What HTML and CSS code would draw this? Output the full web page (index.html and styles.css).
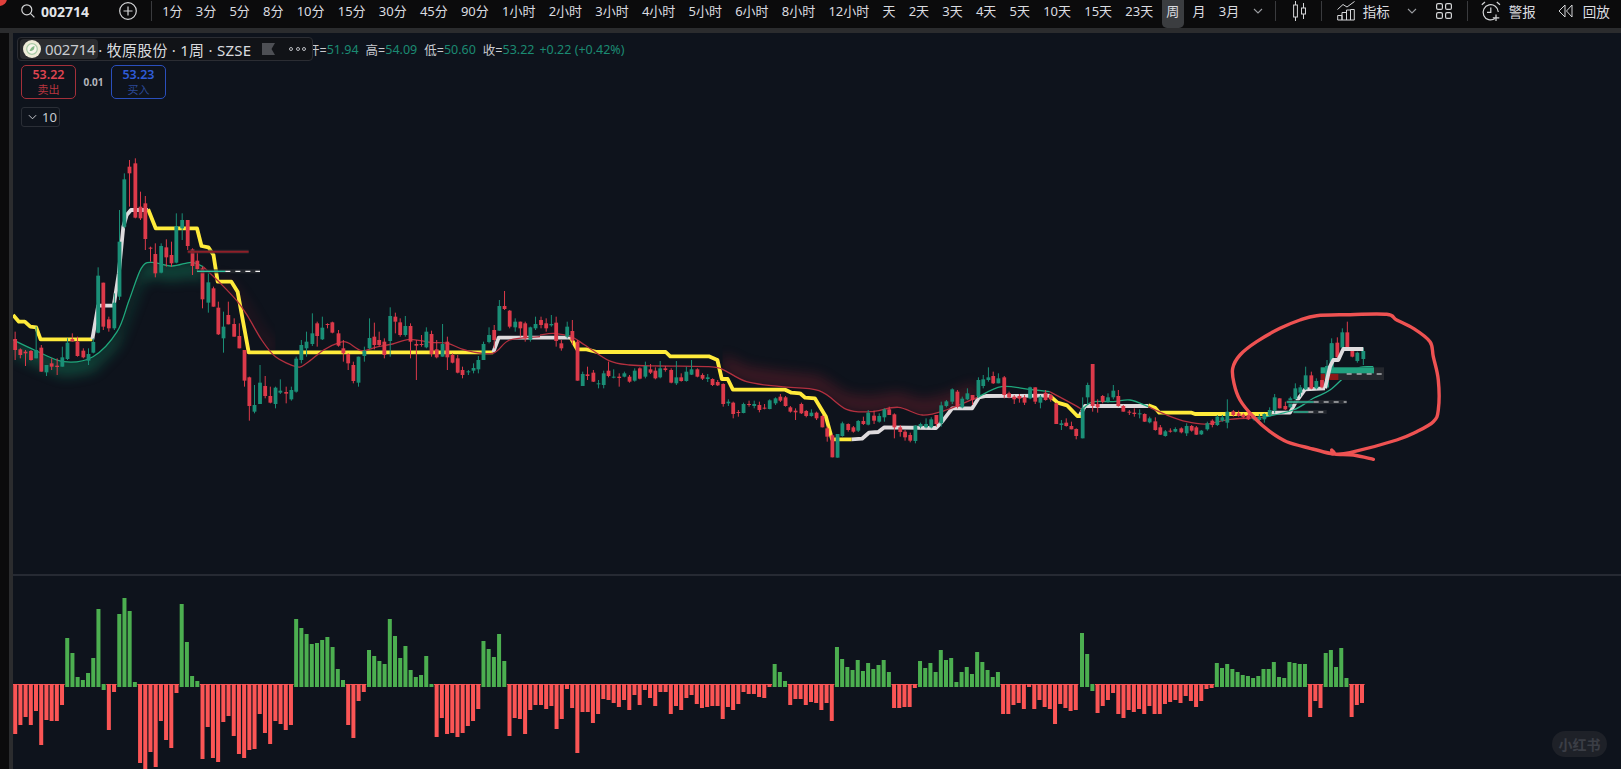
FILE: index.html
```html
<!DOCTYPE html>
<html lang="zh-CN">
<head>
<meta charset="utf-8">
<title>002714 牧原股份</title>
<link rel="stylesheet" href="styles.css">
</head>
<body>
<div class="app">
  <span class="corner-dot"></span>
  <header class="toolbar">
    <svg class="icon-search" viewBox="0 0 14 14"><circle cx="5.8" cy="5.8" r="5"/><path d="M9.4 9.4 13.4 13.4"/></svg>
    <span class="symbol">002714</span>
    <svg class="icon-plus" viewBox="0 0 18 18"><circle cx="9" cy="9" r="8.3"/><path d="M9 4.5v9M4.5 9h9"/></svg>
    <span class="divider first"></span>
    <nav class="intervals">
      <span class="tf">1分</span><span class="tf">3分</span><span class="tf">5分</span><span class="tf">8分</span><span class="tf">10分</span><span class="tf">15分</span><span class="tf">30分</span><span class="tf">45分</span><span class="tf">90分</span><span class="tf">1小时</span><span class="tf">2小时</span><span class="tf">3小时</span><span class="tf">4小时</span><span class="tf">5小时</span><span class="tf">6小时</span><span class="tf">8小时</span><span class="tf">12小时</span><span class="tf">天</span><span class="tf">2天</span><span class="tf">3天</span><span class="tf">4天</span><span class="tf">5天</span><span class="tf">10天</span><span class="tf">15天</span><span class="tf">23天</span><span class="tf active">周</span><span class="tf">月</span><span class="tf">3月</span>
    </nav>
    <svg class="chev chev-tf" viewBox="0 0 10 6"><path d="M1 1l4 4 4-4"/></svg>
    <span class="divider d-candle"></span>
    <svg class="icon-candle" viewBox="0 0 14 20"><path d="M2.5 0v4M2.500 16v4M10.5 2v5M10.500 13v5"/><rect x=".6" y="4" width="3.800" height="12"/><rect x="8.500" y="7" width="4" height="6"/></svg>
    <span class="divider d-ind"></span>
    <svg class="icon-ind" viewBox="0 0 18 20"><path class="thin" d="M.5 8.500 6 3.500 10 6 17.500 .5"/><path class="thin" d="M.7 19V14.500H5V19M5 19V11.500H9.500V19M9.500 19V9H13.500V19M13.500 19V8.500H17.300V19H.7"/></svg>
    <span class="tool ind-label">指标</span>
    <svg class="chev chev-ind" viewBox="0 0 10 6"><path d="M1 1l4 4 4-4"/></svg>
    <svg class="icon-grid" viewBox="0 0 16 16"><rect x=".6" y=".6" width="5.800" height="5.800" rx="1.500"/><rect x="9.600" y=".6" width="5.800" height="5.800" rx="1.500"/><rect x=".6" y="9.600" width="5.800" height="5.800" rx="1.500"/><rect x="9.600" y="9.600" width="5.800" height="5.800" rx="1.500"/></svg>
    <span class="divider d-alarm"></span>
    <svg class="icon-alarm" viewBox="0 0 20 21"><path d="M14 17.600A7.600 7.600 0 1 1 17.300 11"/><path d="M9.800 6.500V11.300H6M.8 3.800 4 1M19 3.800 15.800 1M15 13.500v6.500M11.800 16.800h6.500"/></svg>
    <span class="tool alarm-label">警报</span>
    <svg class="icon-back" viewBox="0 0 15 14"><path d="M7 1 1 7l6 6zM14 1 8.500 7l5.500 6z"/></svg>
    <span class="tool">回放</span>
  </header>

  <div class="workspace">
    <div class="rail"></div>
    <main class="panes">
      <section class="pane pane-price">
        <svg id="price" class="chart" viewBox="13 33 1608 541" preserveAspectRatio="none"></svg>
        <div class="legend-stack">
          <div class="legend-row">
            <div class="legend">
              <span class="chip">
                <svg class="logo" viewBox="0 0 18 18"><circle cx="9" cy="9" r="9" fill="#efecd8"/><circle cx="9" cy="9" r="5.300" fill="#f8f7ec" stroke="#a9cba6" stroke-width="1.200"/><path d="M6.500 11c1-3 3-4.500 5-5 0 3-1 5-5 5z" fill="#84b786"/></svg>
                <span class="chip-code">002714</span>
              </span>
              <span class="legend-title">· 牧原股份 · 1周 · SZSE</span>
              <svg class="flag" viewBox="0 0 13 12"><path d="M0 0H13L9.500 6 13 12H0z"/></svg>
              <span class="dots"><i></i><i></i><i></i></span>
            </div>
            <div class="ohlc">
              <span class="k">开=</span><span class="v">51.94</span>
              <span class="k">高=</span><span class="v">54.09</span>
              <span class="k">低=</span><span class="v">50.60</span>
              <span class="k">收=</span><span class="v">53.22</span>
              <span class="v chg">+0.22 (+0.42%)</span>
            </div>
          </div>
          <div class="trade-row">
            <div class="trade sell"><b>53.22</b><span>卖出</span></div>
            <span class="spread">0.01</span>
            <div class="trade buy"><b>53.23</b><span>买入</span></div>
          </div>
          <div class="collapse"><svg class="chev" viewBox="0 0 10 6"><path d="M1 1l4 4 4-4"/></svg><span>10</span></div>
        </div>
      </section>
      <section class="pane pane-hist">
        <svg id="hist" class="chart" viewBox="13 575 1608 194" preserveAspectRatio="none"></svg>
        <div class="watermark">小红书</div>
      </section>
    </main>
  </div>
</div>
<script src="chart.js"></script>
</body>
</html>
```
FILE: styles.css
```css
* { box-sizing: border-box; }
html, body { margin: 0; height: 100%; overflow: hidden; background: #0b0b0c; }
body { font-family: "Noto Sans", "Noto Sans CJK SC", sans-serif; color: #d8dade; }

.app { position: relative; width: 1621px; height: 769px; display: flex; flex-direction: column; overflow: hidden; }
.corner-dot { position: absolute; left: -8px; top: -9px; width: 15px; height: 15px; border-radius: 50%; background: #e0403c; z-index: 2; }

/* toolbar */
.toolbar { flex: 0 0 28px; height: 28px; display: flex; align-items: center; padding: 0 0 6px 21px; background: #0b0b0c; font-size: 13px; white-space: nowrap; }
.toolbar svg { flex: none; fill: none; stroke: #d5d6d8; stroke-width: 1.2; }
.icon-search { width: 14px; height: 14px; margin-right: 6px; stroke-width: 1.4; }
.symbol { width: 49px; font-size: 14px; font-weight: 700; color: #e2e4e8; }
.icon-plus { width: 18px; height: 18px; margin-left: 29px; }
.divider { flex: none; width: 1px; height: 20px; background: #3a3b3e; }
.divider.first { margin-left: 14px; }
.intervals { display: flex; margin-left: 3.6px; height: 28px; align-items: center; margin-top: 6px; margin-bottom: 0; }
.tf { padding: 0 6.6px 7px; height: 28px; display: flex; align-items: center; color: #dcdde0; }
.tf.active { padding: 0 4.6px 7px; margin: 0 2px; background: #3b3d40; border-radius: 0 0 5px 5px; }
.chev { width: 10px; height: 6px; fill: none; stroke: #9a9ca0; stroke-width: 1.1; }
.toolbar .chev { stroke: #9a9ca0; stroke-width: 1.1; }
.chev-tf { margin-left: 7px; }
.d-candle { margin-left: 12px; }
.icon-candle { width: 14px; height: 20px; margin-left: 17px; stroke-width: 1; }
.toolbar .icon-candle { stroke-width: 1; }
.d-ind { margin-left: 14.500px; }
.icon-ind { width: 18px; height: 20px; margin-left: 15px; }
.toolbar .icon-ind, .toolbar .icon-back { stroke-width: 1; }
.tool { color: #dcdde0; font-size: 13.500px; }
.ind-label { margin-left: 7.500px; }
.chev-ind { margin-left: 17px; }
.icon-grid { width: 16px; height: 16px; margin-left: 19px; }
.d-alarm { margin-left: 15px; }
.icon-alarm { width: 20px; height: 21px; margin-left: 13px; }
.alarm-label { margin-left: 8px; }
.icon-back { width: 15px; height: 14px; margin-left: 22px; margin-right: 10px; }

/* workspace */
.workspace { flex: 1; display: flex; border-top: 5px solid #2b2c2e; min-height: 0; }
.rail { flex: 0 0 13px; background: #0b0b0c; border-right: 4px solid #2b2c2e; }
.panes { flex: 1; display: flex; flex-direction: column; background: #0e131c; min-width: 0; }
.pane { position: relative; }
.pane-price { height: 541px; }
.pane-hist { flex: 1; border-top: 2px solid #262a33; }
.chart { display: block; width: 100%; height: 100%; }

/* legend */
.legend-stack { position: absolute; left: 4px; top: 4px; display: flex; flex-direction: column; align-items: flex-start; }
.legend-row { display: flex; align-items: center; }
.legend { position: relative; z-index: 1; width: 296px; height: 24px; display: flex; align-items: center; padding-left: 2px; background: #111317; border: 1px solid #2b2d33; border-radius: 4px; font-size: 15px; white-space: nowrap; color: #d9dbdf; }
.chip { display: flex; align-items: center; height: 20px; padding: 0 3px 0 3px; gap: 4px; background: #2b2c2f; border-radius: 4px; }
.logo { width: 18px; height: 18px; }
.chip-code { letter-spacing: -.2px; line-height: 20px; color: #c9cbd0; }
.legend-title { letter-spacing: .25px; }
.flag { width: 13px; height: 12px; margin-left: 11px; fill: #4d4f54; }
.dots { display: flex; gap: 2.500px; margin-left: 14px; }
.dots i { width: 4px; height: 4px; border: 1px solid #b9bbc0; border-radius: 50%; }
.ohlc { display: flex; align-items: center; margin-left: -6px; font-size: 12.500px; white-space: nowrap; }
.ohlc .k { color: #c8cacf; }
.ohlc .v { color: #1b8a72; margin-right: 7px; }
.ohlc .chg { margin-left: -2px; margin-right: 0; }

.trade-row { display: flex; align-items: center; margin: 4px 0 0 4px; }
.trade { display: flex; flex-direction: column; align-items: center; justify-content: center; width: 55px; height: 34px; border: 1px solid; border-radius: 5px; line-height: 15px; }
.trade b { font-size: 12.500px; font-weight: 600; }
.trade span { font-size: 11px; }
.sell { border-color: #a4303a; color: #dd4450; }
.sell span { color: #b8353f; }
.buy { border-color: #2a4fbd; color: #2f5cd8; }
.buy span { color: #2c4a98; }
.spread { width: 35px; text-align: center; font-size: 10px; font-weight: 700; color: #b5b7bc; }
.collapse { display: flex; align-items: center; gap: 5px; width: 39px; height: 20px; margin: 8px 0 0 4px; padding-left: 6px; border: 1px solid #2a2e36; border-radius: 3px; font-size: 13px; color: #c9cbd0; }
.collapse .chev { width: 9px; height: 6px; stroke: #c9cbd0; }

.watermark { position: absolute; left: 1539px; bottom: 13px; width: 55px; height: 26px; display: flex; align-items: center; justify-content: center; border-radius: 13px; background: #1e2128; color: #3b3e46; font-size: 14px; font-weight: 700; }
```
FILE: chart.js
```js
// Series are stored in the pixel scales of three chart sections.
const SECTIONS = {
  A: (x, y) => [x * 0.3444, 140 + y / 3],
  B: (x, y) => [540 + x * 0.3444, 280 + y / 3],
  C: (x, y) => [1080 + x / 3, 300 + y / 3]
};
const NS = "http://www.w3.org/2000/svg";
const RED = "#dc3a4a", GREEN = "#1a8f77", WHITE = "#dedbdd", YELLOW = "#ffeb3b";

function el(parent, name, attrs) {
  const n = document.createElementNS(NS, name);
  for (const k in attrs) n.setAttribute(k, attrs[k]);
  parent.appendChild(n);
  return n;
}
const pts = (sec, flat) => {
  const out = [];
  for (let i = 0; i < flat.length; i += 2) out.push(SECTIONS[sec](flat[i], flat[i + 1]));
  return out;
};
const poly = p => "M" + p.map(q => q[0].toFixed(1) + " " + q[1].toFixed(1)).join("L");
function smooth(p) {
  let d = "M" + p[0][0].toFixed(1) + " " + p[0][1].toFixed(1);
  for (let i = 0; i < p.length - 1; i++) {
    const a = p[Math.max(i - 1, 0)], b = p[i], c = p[i + 1], e = p[Math.min(i + 2, p.length - 1)];
    d += "C" + [b[0] + (c[0] - a[0]) / 6, b[1] + (c[1] - a[1]) / 6, c[0] - (e[0] - b[0]) / 6, c[1] - (e[1] - b[1]) / 6, c[0], c[1]]
      .map(v => v.toFixed(1)).join(" ");
  }
  return d;
}

/* ---------- price pane ---------- */
const price = document.getElementById("price");
const defs = el(price, "defs", {});
const blur = el(defs, "filter", { id: "glow", x: "-20%", y: "-100%", width: "140%", height: "300%" });
el(blur, "feGaussianBlur", { stdDeviation: "7" });

function glowBand(id, line, dir, color, depth, op) {
  const clip = el(defs, "clipPath", { id });
  const lim = dir > 0 ? 800 : 0;
  el(clip, "path", { d: smooth(line) + "L" + line[line.length - 1][0] + " " + lim + "L" + line[0][0] + " " + lim + "Z" });
  const g = el(price, "g", { "clip-path": "url(#" + id + ")" });
  const off = line.slice().reverse().map(q => [q[0], q[1] + dir * depth]);
  el(g, "path", { d: poly(line) + "L" + poly(off).slice(1) + "Z", fill: color, opacity: op, filter: "url(#glow)" });
}

const maGreenA = pts("A", [38,600,100,630,185,665,270,650,340,575,375,480,410,385,440,367,500,378,555,367,590,380]);
const maRedA = pts("A", [590,380,640,430,690,485,720,530,760,600,800,650,860,680,890,670,940,630,985,608,1010,608,1050,632,1090,622,1140,612,1190,598,1250,607,1300,610,1350,630,1430,640,1480,600,1568,590]);
const maRedB = pts("B", [0,165,40,160,90,170,130,195,200,242,260,255,350,258,490,260,530,268,600,305,700,320,810,332,890,388,960,395,1040,382,1110,405,1180,390,1270,352]);
const maGreenB = pts("B", [1270,352,1340,320,1420,328,1480,335]);
const maRedBC = pts("B", [1480,335,1568,385]).concat(pts("C", [0,335]));
const maGreenC1 = pts("C", [10,325,40,305,100,305,150,300,205,320]);
const maRedC = pts("C", [205,320,260,345,320,365,380,372,450,358,550,352]);
const maGreenC2 = pts("C", [550,352,640,330,700,295,750,270,800,225,840,202,880,200]);

glowBand("gA", maGreenA, 1, "#12a06f", 14, .42);
glowBand("rA", pts("A", [640,430,690,485,720,530,760,600,800,650]), -1, "#c02a3a", 10, .22);
glowBand("rB", pts("B", [530,268,600,305,700,320,810,332,890,388,960,395,1040,382,1110,405,1180,390,1270,352]), -1, "#c02a3a", 14, .3);

const steps = [
  [YELLOW, pts("A", [38,525,55,545,72,545,88,560,105,562,118,598,268,598])],
  [WHITE, pts("A", [268,598,285,497,330,497,345,400,358,260,368,225,380,210,430,210])],
  [YELLOW, pts("A", [430,208,452,265,572,265,585,318,605,322,620,345,632,425,672,425,690,455,722,637,1432,637])],
  [WHITE, pts("A", [1432,637,1448,593,1568,593]).concat(pts("B", [0,173,90,173]))],
  [YELLOW, pts("B", [90,175,108,208,135,208,165,216,365,216,378,229,490,229,515,240,528,297,545,297,560,329,712,329,730,338,755,340,770,353,798,355,830,410,848,478,905,478])],
  [WHITE, pts("B", [905,478,935,476,955,458,982,456,1000,442,1150,444,1170,422,1197,385,1255,385,1275,352,1295,348,1480,347])],
  [YELLOW, pts("B", [1480,347,1503,368,1530,376,1560,408,1578,408])],
  [WHITE, pts("C", [0,345,15,318,205,318])],
  [YELLOW, pts("C", [205,316,225,323,238,338,335,338,345,342,575,342])],
  [WHITE, pts("C", [575,338,630,338,645,310,675,268,735,265])]
];
steps.forEach(s => el(price, "path", { d: poly(s[1]), fill: "none", stroke: s[0], "stroke-width": 3.8, "stroke-linejoin": "round" }));

[[maGreenA, "#1fa87c"], [maRedA, "#b3303f"], [maRedB, "#b3303f"], [maGreenB, "#1fa87c"], [maRedBC, "#b3303f"],
 [maGreenC1, "#1fa87c"], [maRedC, "#b3303f"], [maGreenC2, "#27b08a"]].forEach(m =>
  el(price, "path", { d: smooth(m[0]), fill: "none", stroke: m[1], "stroke-width": 1.3 }));

/* candles: x color wickTop bodyTop bodyBottom wickBottom */
const CANDLES = {
  A: `44 r 575 597 630 660;59 r 625 628 645 655;74 r 630 635 640 678;90 r 630 633 660 662;105 g 560 630 655 655;120 r 615 623 695 695;135 g 675 675 697 708;150 r 655 670 680 690;166 r 655 677 681 705;181 g 620 652 680 680;196 g 595 608 657 660;210 r 580 597 604 605;225 r 590 605 648 650;242 r 625 632 652 655;257 g 625 642 662 675;271 g 595 606 638 640;285 g 382 407 578 580;300 r 428 428 560 570;316 r 530 538 565 575;332 g 460 488 565 570;347 g 210 305 470 480;361 g 100 118 260 265;376 r 60 80 100 200;393 r 55 70 233 235;408 r 155 200 235 240;422 r 168 190 297 330;437 r 320 323 326 365;451 r 310 342 400 412;468 g 310 318 398 400;483 r 298 322 352 380;498 r 305 345 370 380;512 g 220 258 368 370;529 g 220 240 265 300;545 r 240 240 318 330;559 r 325 328 378 405;573 r 333 362 387 395;588 r 380 385 478 505;605 g 400 427 488 518;620 r 440 445 500 500;634 r 485 503 583 585;649 g 515 560 595 638;663 r 485 525 553 553;680 r 535 552 590 590;695 r 550 588 625 625;710 r 630 630 722 740;724 r 710 712 798 842;739 g 735 795 815 820;755 g 675 728 792 792;770 r 708 738 768 775;785 r 740 768 788 790;800 g 740 743 792 805;814 g 718 752 758 762;831 r 740 756 761 790;846 g 740 750 778 782;860 g 650 656 755 758;875 g 600 615 660 670;890 g 575 605 625 650;907 g 520 580 612 618;921 r 545 550 588 620;936 g 530 563 598 600;951 r 550 552 555 565;965 r 545 547 578 580;983 r 570 580 617 620;997 r 600 625 640 665;1011 r 640 642 670 690;1026 r 665 675 723 730;1041 g 650 650 728 740;1058 g 620 632 648 665;1073 g 535 594 625 628;1087 r 548 590 615 628;1101 r 575 600 615 620;1116 r 595 605 645 655;1133 g 502 528 603 650;1148 r 518 530 545 580;1162 r 535 547 585 590;1177 g 528 558 585 590;1192 r 550 558 605 655;1209 r 600 612 617 720;1224 r 585 612 615 620;1238 g 562 575 622 625;1253 r 572 582 642 650;1268 r 600 628 652 655;1285 g 552 612 650 650;1299 r 590 605 652 690;1314 r 640 645 668 670;1329 r 645 655 698 700;1343 r 680 690 705 715;1360 g 690 694 697 705;1375 g 670 684 692 700;1389 g 648 660 688 700;1404 g 605 612 660 660;1420 g 562 585 606 610;1435 r 555 570 600 625;1450 g 480 498 572 572;1465 r 453 498 507 510;1480 r 510 512 560 565;1496 g 535 545 562 575;1511 r 545 545 565 590;1525 r 545 550 595 605;1540 g 560 562 600 605;1555 g 530 552 565 570`,
  B: `3 r 110 120 135 145;18 r 115 130 145 155;33 g 105 132 136 140;47 r 110 128 183 200;62 r 180 190 205 212;79 g 125 140 170 175;94 r 120 153 182 195;109 r 180 185 302 302;124 g 275 282 318 318;138 r 260 283 288 300;155 r 270 278 305 306;170 g 300 310 313 325;185 g 272 280 315 325;199 r 245 272 288 292;214 g 268 290 293 295;230 r 280 290 294 320;245 g 275 280 290 292;260 r 285 290 305 308;275 g 265 272 302 305;290 r 262 265 296 298;306 g 245 258 290 295;321 r 252 268 278 282;335 r 262 272 295 298;349 g 243 265 292 295;364 r 258 265 270 275;381 r 265 270 308 310;396 g 243 292 310 315;410 r 280 292 303 305;425 g 260 275 303 305;440 g 240 268 284 285;457 r 265 268 290 292;472 r 280 285 296 300;487 g 282 292 297 306;501 r 295 297 315 318;516 r 300 306 316 318;532 r 310 312 372 380;547 g 358 365 370 378;561 r 365 368 402 415;576 r 390 396 399 410;591 g 368 372 399 400;607 r 362 372 375 380;622 g 362 372 378 385;637 r 365 375 390 397;652 r 372 383 386 388;667 g 358 361 387 388;684 g 352 355 370 375;698 r 342 350 362 366;713 r 348 352 378 380;727 r 378 382 395 398;742 r 385 392 397 420;759 r 368 372 400 402;773 r 390 393 408 412;788 g 388 398 408 410;803 r 395 398 415 420;820 r 405 408 442 442;834 r 440 445 470 485;849 r 462 466 532 532;864 g 462 462 533 533;878 g 425 430 468 470;895 r 430 432 450 455;910 r 438 442 455 458;924 g 420 423 452 456;939 r 410 423 432 435;953 g 390 398 434 436;970 r 392 407 422 432;985 g 400 408 425 428;1000 g 385 388 412 425;1014 r 380 388 405 405;1029 r 400 403 442 475;1046 r 435 442 456 470;1060 r 450 455 472 482;1075 r 458 465 482 487;1090 g 435 437 483 490;1105 g 428 432 440 445;1121 g 415 432 442 445;1136 g 412 418 442 445;1151 r 405 405 432 440;1165 g 365 376 430 440;1180 g 360 364 378 382;1197 g 325 328 365 372;1212 r 330 335 380 385;1226 g 350 356 382 385;1241 g 325 340 358 360;1256 r 345 345 360 375;1273 g 292 300 348 352;1287 g 285 298 318 325;1302 g 262 292 300 305;1316 r 275 288 310 312;1331 g 280 295 310 310;1348 r 288 292 345 355;1362 r 335 340 352 355;1377 r 345 350 358 372;1392 r 342 348 356 368;1407 r 345 352 368 375;1423 g 320 322 355 358;1438 r 322 322 365 372;1453 g 345 350 368 385;1468 r 330 338 360 362;1483 r 342 345 358 365;1499 r 368 370 432 432;1514 g 420 430 435 450;1528 r 415 428 438 440;1543 r 425 438 448 448;1557 r 445 447 468 478`,
  C: `8 g 292 325 415 415;23 g 248 255 292 315;38 r 192 192 318 335;53 r 298 312 322 338;68 r 285 288 306 310;84 g 280 292 305 308;100 g 255 272 292 298;115 r 270 288 318 320;130 r 315 318 335 335;148 r 330 335 338 345;163 r 325 338 342 350;179 g 328 340 343 355;194 r 340 342 365 366;209 g 350 355 367 370;226 r 352 364 390 392;241 r 375 382 404 405;256 g 390 394 408 410;271 r 385 392 395 398;286 g 382 387 395 397;304 r 382 385 397 400;320 g 370 378 400 408;335 r 375 378 392 395;349 r 378 382 404 405;364 g 390 392 403 405;382 g 365 370 388 392;397 r 358 362 375 382;412 g 345 350 375 378;427 g 345 352 362 365;442 g 298 335 368 385;460 r 330 334 345 350;476 r 332 340 348 350;490 r 340 344 352 355;505 r 340 345 358 360;522 g 345 348 358 362;538 g 342 350 360 365;553 g 340 342 358 368;569 g 322 330 346 350;584 g 282 292 332 340;599 r 295 295 325 325;616 r 305 318 328 330;631 g 290 295 322 325;646 g 250 265 297 305;661 g 255 262 278 290;677 g 200 226 268 270;694 r 215 226 266 268;709 g 235 243 265 268;726 r 225 240 262 265;741 g 180 198 262 265;755 g 115 130 205 210;772 r 112 128 172 175;787 g 85 97 143 145;802 r 65 97 143 145;817 r 143 147 170 172;832 g 155 158 183 188;850 g 143 153 177 195`
};
for (const sec in CANDLES) {
  CANDLES[sec].split(";").forEach(row => {
    const f = row.trim().split(" ");
    const col = f[1] === "r" ? RED : GREEN;
    const map = y => SECTIONS[sec](+f[0], +y);
    const top = map(f[2]), bt = map(f[3]), bb = map(f[4]), bot = map(f[5]);
    el(price, "line", { x1: top[0], x2: top[0], y1: top[1], y2: bot[1], stroke: col, "stroke-width": 1 });
    el(price, "rect", { x: top[0] - 1.9, y: bt[1], width: 3.8, height: Math.max(bb[1] - bt[1], 1), fill: col });
  });
}

/* horizontal position markers */
function marker(sec, x1, x2, y, color) {
  const a = SECTIONS[sec](x1, y), b = SECTIONS[sec](x2, y);
  el(price, "rect", { x: a[0], y: a[1] - 2, width: b[0] - a[0], height: 4, fill: "#2a2d33", opacity: .75 });
  el(price, "line", { x1: a[0], x2: a[0] + (b[0] - a[0]) * .45, y1: a[1], y2: a[1], stroke: color, "stroke-width": 1.4 });
  el(price, "line", { x1: a[0] + (b[0] - a[0]) * .45, x2: b[0], y1: a[1], y2: a[1], stroke: "#f2f2f2", "stroke-width": 1.2, "stroke-dasharray": "5 5" });
}
const redRule = SECTIONS.A(545, 335), redRuleEnd = SECTIONS.A(722, 335);
el(price, "rect", { x: redRule[0], y: redRule[1] - 2, width: redRuleEnd[0] - redRule[0], height: 4, fill: "#2a2d33", opacity: .6 });
el(price, "line", { x1: redRule[0], x2: redRuleEnd[0], y1: redRule[1], y2: redRule[1], stroke: "#8e1f28", "stroke-width": 2 });
marker("A", 572, 755, 394, "#2fc5a0");
marker("C", 620, 800, 306, "#2fc5a0");
marker("C", 640, 740, 336, "#2fc5a0");

const box = (x1, y1, x2, y2, fill) => {
  const a = SECTIONS.C(x1, y1), b = SECTIONS.C(x2, y2);
  el(price, "rect", { x: a[0], y: a[1], width: b[0] - a[0], height: b[1] - a[1], fill });
};
box(722, 202, 912, 240, "#24272d");
box(722, 202, 882, 220, "#21a17f");
box(722, 222, 775, 240, "#8d1717");
[[741, 198, 262], [755, 130, 205]].forEach(c => {
  const t = SECTIONS.C(c[0], c[1]), b = SECTIONS.C(c[0], c[2]);
  el(price, "rect", { x: t[0] - 1.9, y: t[1], width: 3.8, height: b[1] - t[1], fill: GREEN });
});
const dashA = SECTIONS.C(800, 222), dashB = SECTIONS.C(905, 222);
el(price, "line", { x1: dashA[0], x2: dashB[0], y1: dashA[1], y2: dashA[1], stroke: "#f2f2f2", "stroke-width": 1.2, "stroke-dasharray": "5 5" });
el(price, "path", { d: poly(pts("C", [735,265,750,200,760,180,775,180,790,147,850,147])), fill: "none", stroke: WHITE, "stroke-width": 3.8, "stroke-linejoin": "round" });

/* hand-drawn circle */
el(price, "path", {
  d: smooth(pts("C", [880,478,820,465,765,462,755,450,760,462,690,445,620,425,570,395,520,350,480,300,462,250,458,205,480,165,530,125,600,85,660,60,710,47,800,44,920,43,950,60,1000,85,1050,125,1060,170,1075,240,1075,330,1060,365,1010,395,950,420,810,458,760,462])),
  fill: "none", stroke: "#ee5252", "stroke-width": 3.4, "stroke-linecap": "round", "stroke-linejoin": "round"
});

/* ---------- histogram pane ---------- */
const hist = document.getElementById("hist");
const SERIES = [
  { x0: 15.2, x1: 535.5, green: [17], v: [-144,-117,-93,-117,-75,-177,-102,-105,-105,-57,141,96,24,15,36,81,228,-12,-132,-18,213,261,222,9,-231,-255,-198,-243,-105,-162,-186,-21,243,129,27,12,-219,-123,-216,-228,-108,-90,-150,-204,-216,-192,-189,-84,-141,-174,-105,-114,-132,-117,198,171,153,123,126,135,144,114,48,15,-117,-156,-45,-18,105,87,72,63,198,147,81,117,45,24,30,87,3,-153,-96,-144,-141,-153,-141,-120,-105,-69,132,108,84,153,72,-150,-96,-99,-144,-72,-57] },
  { x0: 541, x1: 1075.8, green: [], v: [-57,-69,-60,-129,-99,-9,-66,-201,-78,-78,-111,-84,-39,-42,-51,-63,-42,-72,-27,-57,-12,-36,-60,-18,-18,-84,-60,-72,-36,-27,-54,-66,-63,-60,-60,-99,-63,-72,-54,-18,-24,-24,-33,-36,-3,63,39,12,-57,-39,-39,-57,-48,-51,-72,-51,-105,114,78,54,45,75,42,66,48,60,75,39,-66,-66,-63,-63,-6,72,51,66,39,105,75,81,9,39,54,33,99,69,45,24,39,-84,-84,-57,-51,-69,-3,-69,-42,-63,-69,-114,-54,-66,-75,-72] },
  { x0: 1082, x1: 1362, green: [2], v: [156,93,-15,-81,-60,-42,-21,-84,-96,-72,-78,-69,-84,-60,-84,-84,-54,-48,-42,-51,-30,-45,-63,-45,-9,-6,66,51,63,48,39,30,27,21,27,48,48,69,24,21,69,66,63,63,-93,-45,-66,96,105,54,111,21,-93,-57,-51] }
];
const BASE = 684;
SERIES.forEach(s => {
  const dx = (s.x1 - s.x0) / (s.v.length - 1);
  s.v.forEach((val, i) => {
    const x = s.x0 + i * dx, h = Math.abs(val) / 3;
    const fill = (val > 0 || s.green.includes(i)) ? "#4caf50" : "#fb5555";
    const y = val > 0 ? BASE - h : BASE - 1;
    el(hist, "rect", { x: x - 2, y, width: 4, height: h + 2, fill });
    if (val < 0 && fill === "#fb5555") el(hist, "rect", { x: x - 2.6, y: BASE - 1, width: 5.2, height: 1, fill });
  });
});
```
